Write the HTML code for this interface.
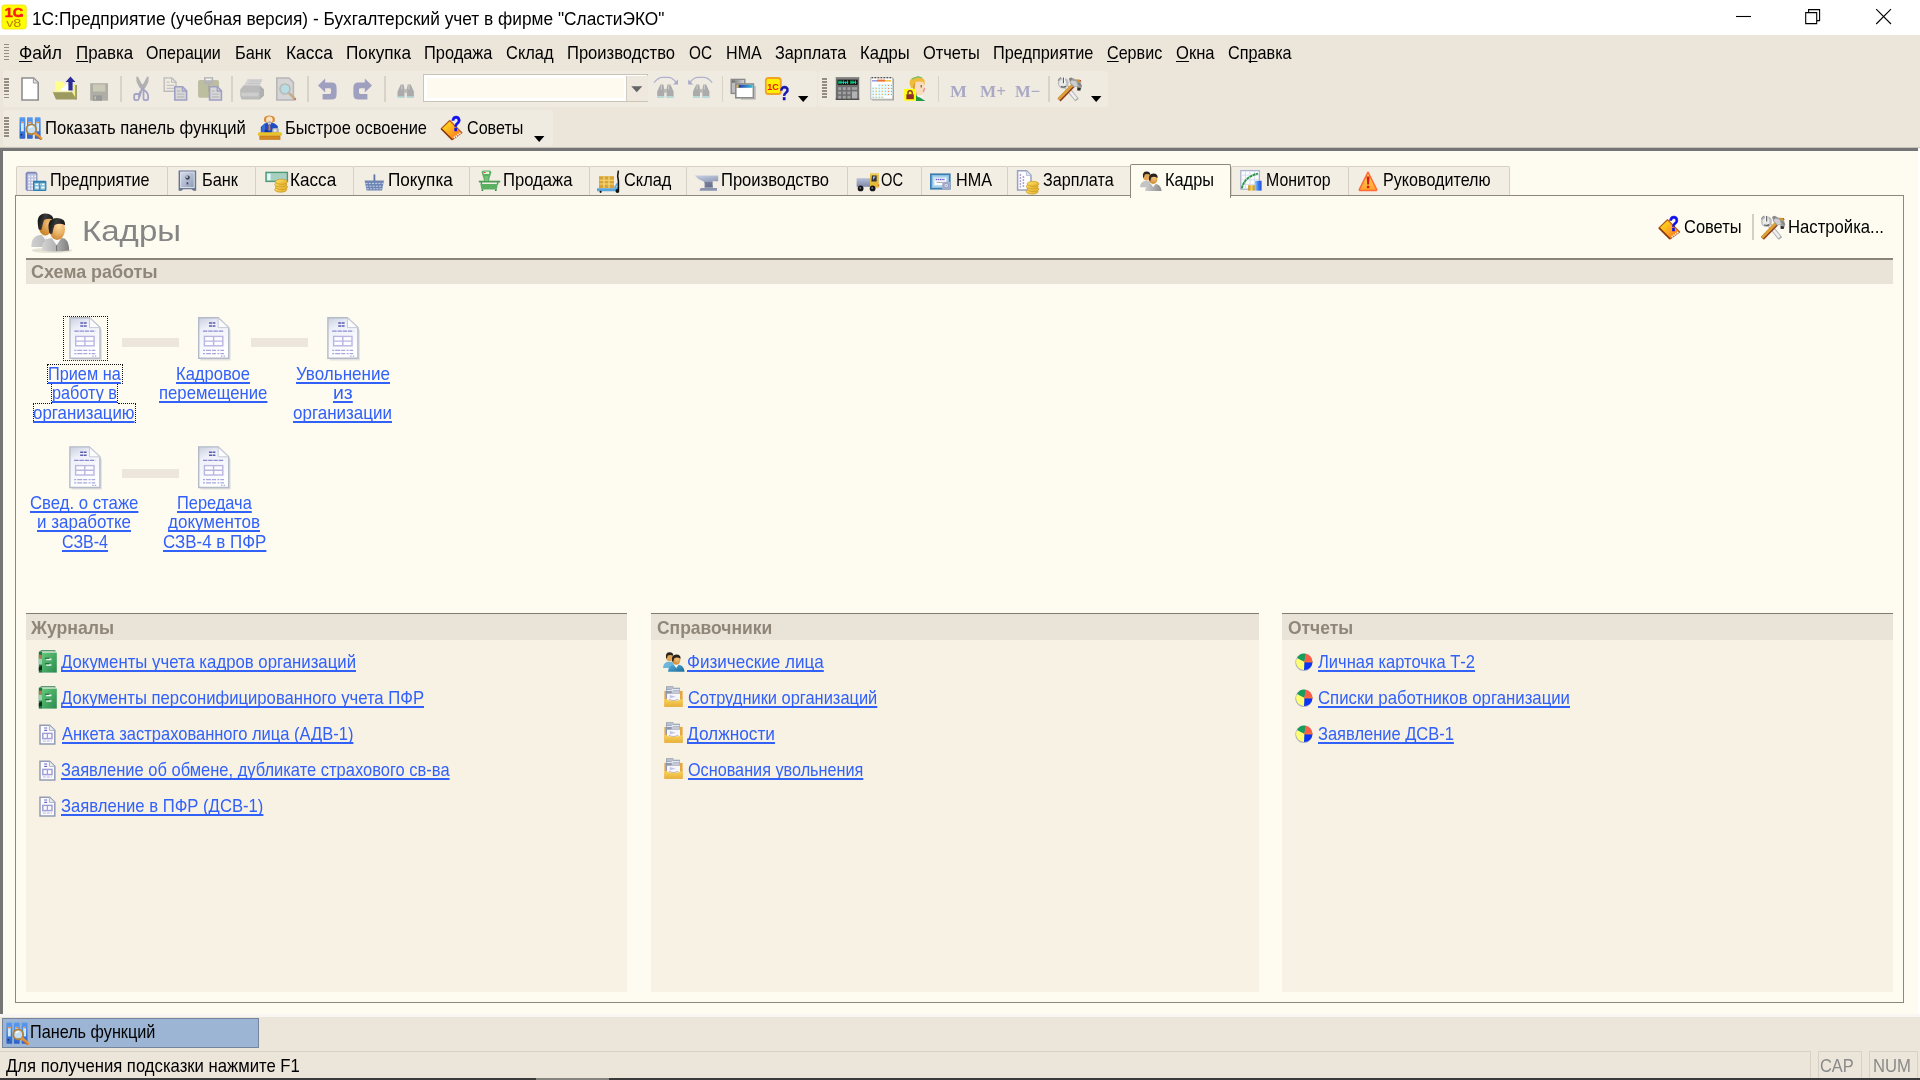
<!DOCTYPE html>
<html lang="ru"><head><meta charset="utf-8"><title>1С:Предприятие</title>
<style>
html,body{margin:0;padding:0}
body{width:1920px;height:1080px;overflow:hidden;background:#ece5da;position:relative;font-family:"Liberation Sans", sans-serif;color:#000}
.b{position:absolute;display:block}
.t{position:absolute;white-space:pre;transform-origin:0 0;display:block;filter:blur(0.35px)}
.ic{filter:blur(0.4px)}
.u{text-decoration:underline;text-decoration-thickness:1.5px;text-underline-offset:2.3px;text-decoration-skip-ink:none}
u{text-decoration-thickness:1.4px;text-underline-offset:2px;text-decoration-skip-ink:none}
svg{overflow:visible}
</style></head>
<body>
<div class="b" style="left:0px;top:0px;width:1920px;height:35px;background:#fff"></div>
<div class="b" style="left:2.5px;top:71.2px;width:814px;height:36.2px;background:#f0ebe1;border-radius:3.5px"></div>
<div class="b" style="left:818px;top:71.2px;width:290.4px;height:36.2px;background:#f0ebe1;border-radius:3.5px"></div>
<div class="b" style="left:2.5px;top:109.6px;width:550.2px;height:36.6px;background:#f0ebe1;border-radius:3.5px"></div>
<div class="b" style="left:0px;top:147.5px;width:1920px;height:869px;background:#fefbf0"></div>
<div class="b" style="left:0px;top:147px;width:1920px;height:1px;background:#c9c4bb"></div>
<div class="b" style="left:0px;top:148px;width:1918px;height:2.5px;background:#757575"></div>
<div class="b" style="left:0px;top:148px;width:2.5px;height:865.5px;background:#757575"></div>
<div class="b" style="left:1917.5px;top:149px;width:2.5px;height:868px;background:#fff"></div>
<div class="b" style="left:0px;top:1013.5px;width:1920px;height:3px;background:#f7f6f2"></div>
<div class="b" style="left:15.8px;top:165.8px;width:152.09999999999997px;height:30px;background:#f3eee3;border:1.2px solid #d6d0c4;border-bottom:none;box-sizing:border-box;border-radius:2px 2px 0 0"></div>
<div class="b" style="left:166.7px;top:165.8px;width:89.90000000000002px;height:30px;background:#f3eee3;border:1.2px solid #d6d0c4;border-bottom:none;box-sizing:border-box;border-radius:2px 2px 0 0"></div>
<div class="b" style="left:255.4px;top:165.8px;width:98.3px;height:30px;background:#f3eee3;border:1.2px solid #d6d0c4;border-bottom:none;box-sizing:border-box;border-radius:2px 2px 0 0"></div>
<div class="b" style="left:352.5px;top:165.8px;width:117.39999999999999px;height:30px;background:#f3eee3;border:1.2px solid #d6d0c4;border-bottom:none;box-sizing:border-box;border-radius:2px 2px 0 0"></div>
<div class="b" style="left:468.7px;top:165.8px;width:121.20000000000006px;height:30px;background:#f3eee3;border:1.2px solid #d6d0c4;border-bottom:none;box-sizing:border-box;border-radius:2px 2px 0 0"></div>
<div class="b" style="left:588.7px;top:165.8px;width:98.79999999999991px;height:30px;background:#f3eee3;border:1.2px solid #d6d0c4;border-bottom:none;box-sizing:border-box;border-radius:2px 2px 0 0"></div>
<div class="b" style="left:686.3px;top:165.8px;width:161.60000000000008px;height:30px;background:#f3eee3;border:1.2px solid #d6d0c4;border-bottom:none;box-sizing:border-box;border-radius:2px 2px 0 0"></div>
<div class="b" style="left:846.7px;top:165.8px;width:75.29999999999991px;height:30px;background:#f3eee3;border:1.2px solid #d6d0c4;border-bottom:none;box-sizing:border-box;border-radius:2px 2px 0 0"></div>
<div class="b" style="left:920.8px;top:165.8px;width:87.1000000000001px;height:30px;background:#f3eee3;border:1.2px solid #d6d0c4;border-bottom:none;box-sizing:border-box;border-radius:2px 2px 0 0"></div>
<div class="b" style="left:1006.7px;top:165.8px;width:125.29999999999991px;height:30px;background:#f3eee3;border:1.2px solid #d6d0c4;border-bottom:none;box-sizing:border-box;border-radius:2px 2px 0 0"></div>
<div class="b" style="left:1230.6px;top:165.8px;width:118.1000000000001px;height:30px;background:#f3eee3;border:1.2px solid #d6d0c4;border-bottom:none;box-sizing:border-box;border-radius:2px 2px 0 0"></div>
<div class="b" style="left:1347.5px;top:165.8px;width:161.99999999999994px;height:30px;background:#f3eee3;border:1.2px solid #d6d0c4;border-bottom:none;box-sizing:border-box;border-radius:2px 2px 0 0"></div>
<div class="b" style="left:15.2px;top:195.2px;width:1888.4px;height:807.7px;border:1.9px solid #8c887b;box-sizing:border-box"></div>
<div class="b" style="left:1130.0px;top:164px;width:101.40000000000013px;height:33.5px;background:#fefbf0;border:1.7px solid #8c887b;border-bottom:none;box-sizing:border-box;border-radius:2px 2px 0 0"></div>
<div class="b" style="left:25.8px;top:258.4px;width:1867.4px;height:1.9px;background:#8a8578"></div>
<div class="b" style="left:25.8px;top:260.2px;width:1867.4px;height:23.5px;background:#e9e3d8"></div>
<div class="b" style="left:1752px;top:214px;width:1.5px;height:26px;background:#d4cfc4"></div>
<div class="b" style="left:121.5px;top:338.2px;width:57px;height:8.8px;background:#ece6dc"></div>
<div class="b" style="left:250.5px;top:338.2px;width:57px;height:8.8px;background:#ece6dc"></div>
<div class="b" style="left:121.5px;top:468.8px;width:57px;height:8.8px;background:#ece6dc"></div>
<div class="b" style="left:63px;top:315.5px;width:45.3px;height:45.3px;border:1.6px dotted #111;box-sizing:border-box"></div>
<div class="b" style="left:46.8px;top:364px;width:76px;height:20.4px;border:1.6px dotted #111;box-sizing:border-box;border-bottom:none"></div>
<div class="b" style="left:51.2px;top:384px;width:67px;height:19.4px;border-left:1.6px dotted #111;border-right:1.6px dotted #111;box-sizing:border-box"></div>
<div class="b" style="left:33px;top:403px;width:103.4px;height:20.2px;border:1.6px dotted #111;box-sizing:border-box;border-top:none"></div>
<div class="b" style="left:33px;top:403px;width:19px;height:1.6px;border-top:1.6px dotted #111"></div>
<div class="b" style="left:118px;top:403px;width:18.4px;height:1.6px;border-top:1.6px dotted #111"></div>
<div class="b" style="left:46.8px;top:383.4px;width:5px;height:1.6px;border-top:1.6px dotted #111"></div>
<div class="b" style="left:118px;top:383.4px;width:4.8px;height:1.6px;border-top:1.6px dotted #111"></div>
<div class="b" style="left:25.8px;top:640px;width:601.2px;height:352px;background:#f8f2e5"></div>
<div class="b" style="left:25.8px;top:614.4px;width:601.2px;height:25.4px;background:#e9e3d8"></div>
<div class="b" style="left:25.8px;top:612.6px;width:601.2px;height:1.9px;background:#837d70"></div>
<div class="b" style="left:650.8px;top:640px;width:607.8px;height:352px;background:#f8f2e5"></div>
<div class="b" style="left:650.8px;top:614.4px;width:607.8px;height:25.4px;background:#e9e3d8"></div>
<div class="b" style="left:650.8px;top:612.6px;width:607.8px;height:1.9px;background:#837d70"></div>
<div class="b" style="left:1282.3px;top:640px;width:610.7px;height:352px;background:#f8f2e5"></div>
<div class="b" style="left:1282.3px;top:614.4px;width:610.7px;height:25.4px;background:#e9e3d8"></div>
<div class="b" style="left:1282.3px;top:612.6px;width:610.7px;height:1.9px;background:#837d70"></div>
<div class="b" style="left:1.8px;top:1018.2px;width:257.4px;height:29.4px;background:#9db5d5;border:1.5px solid #76849e;box-sizing:border-box"></div>
<div class="b" style="left:0px;top:1050.8px;width:1810.5px;height:1.2px;background:#d6d0c5"></div>
<div class="b" style="left:1809.5px;top:1050.8px;width:1.2px;height:27px;background:#d6d0c5"></div>
<div class="b" style="left:1818px;top:1050.8px;width:44px;height:27.5px;border:1.2px solid #d6d0c5;border-bottom:none;box-sizing:border-box"></div>
<div class="b" style="left:1869px;top:1050.8px;width:48.5px;height:27.5px;border:1.2px solid #d6d0c5;border-bottom:none;box-sizing:border-box"></div>
<div class="b" style="left:0px;top:1077.6px;width:1920px;height:2.4px;background:#3a3a3a"></div>
<div class="b" style="left:536px;top:1077.6px;width:73px;height:2.4px;background:#85847f"></div>
<div class="b" style="left:120.1px;top:76px;width:1.5px;height:26px;background:#d9d3c7"></div>
<div class="b" style="left:231.0px;top:76px;width:1.5px;height:26px;background:#d9d3c7"></div>
<div class="b" style="left:307.3px;top:76px;width:1.5px;height:26px;background:#d9d3c7"></div>
<div class="b" style="left:384.0px;top:76px;width:1.5px;height:26px;background:#d9d3c7"></div>
<div class="b" style="left:721.8px;top:76px;width:1.5px;height:26px;background:#d9d3c7"></div>
<div class="b" style="left:937.5999999999999px;top:76px;width:1.5px;height:26px;background:#d9d3c7"></div>
<div class="b" style="left:1048.3px;top:76px;width:1.5px;height:26px;background:#d9d3c7"></div>
<div class="b" style="left:4.3px;top:43.8px;width:4.8px;height:1.6px;background:#958d81"></div><div class="b" style="left:4.3px;top:46.82px;width:4.8px;height:1.6px;background:#958d81"></div><div class="b" style="left:4.3px;top:49.84px;width:4.8px;height:1.6px;background:#958d81"></div><div class="b" style="left:4.3px;top:52.86px;width:4.8px;height:1.6px;background:#958d81"></div><div class="b" style="left:4.3px;top:55.88px;width:4.8px;height:1.6px;background:#958d81"></div><div class="b" style="left:4.3px;top:58.9px;width:4.8px;height:1.6px;background:#958d81"></div>
<div class="b" style="left:4.3px;top:78.4px;width:4.8px;height:1.6px;background:#958d81"></div><div class="b" style="left:4.3px;top:81.42px;width:4.8px;height:1.6px;background:#958d81"></div><div class="b" style="left:4.3px;top:84.44px;width:4.8px;height:1.6px;background:#958d81"></div><div class="b" style="left:4.3px;top:87.46px;width:4.8px;height:1.6px;background:#958d81"></div><div class="b" style="left:4.3px;top:90.48px;width:4.8px;height:1.6px;background:#958d81"></div><div class="b" style="left:4.3px;top:93.5px;width:4.8px;height:1.6px;background:#958d81"></div><div class="b" style="left:4.3px;top:96.52px;width:4.8px;height:1.6px;background:#958d81"></div>
<div class="b" style="left:822px;top:78.3px;width:4.8px;height:1.6px;background:#958d81"></div><div class="b" style="left:822px;top:81.32px;width:4.8px;height:1.6px;background:#958d81"></div><div class="b" style="left:822px;top:84.34px;width:4.8px;height:1.6px;background:#958d81"></div><div class="b" style="left:822px;top:87.36px;width:4.8px;height:1.6px;background:#958d81"></div><div class="b" style="left:822px;top:90.38px;width:4.8px;height:1.6px;background:#958d81"></div><div class="b" style="left:822px;top:93.4px;width:4.8px;height:1.6px;background:#958d81"></div><div class="b" style="left:822px;top:96.42px;width:4.8px;height:1.6px;background:#958d81"></div>
<div class="b" style="left:4.3px;top:117.2px;width:4.8px;height:1.6px;background:#958d81"></div><div class="b" style="left:4.3px;top:120.22px;width:4.8px;height:1.6px;background:#958d81"></div><div class="b" style="left:4.3px;top:123.24px;width:4.8px;height:1.6px;background:#958d81"></div><div class="b" style="left:4.3px;top:126.26px;width:4.8px;height:1.6px;background:#958d81"></div><div class="b" style="left:4.3px;top:129.28px;width:4.8px;height:1.6px;background:#958d81"></div><div class="b" style="left:4.3px;top:132.3px;width:4.8px;height:1.6px;background:#958d81"></div><div class="b" style="left:4.3px;top:135.32px;width:4.8px;height:1.6px;background:#958d81"></div>
<div class="b" style="left:423px;top:74.4px;width:225px;height:27.8px;background:#ffffff;border:1.5px solid #cbc5b8;box-sizing:border-box"></div>
<div class="b" style="left:427px;top:77.8px;width:197px;height:20.4px;background:#fefaf0"></div>
<div class="b" style="left:626.4px;top:75.6px;width:20.3px;height:25.4px;background:#eee8de;border-left:1.2px solid #d2ccbf"></div>
<svg class="b" style="left:631px;top:85.5px" width="12" height="7"><path d="M0.3 0.3H11.3L5.8 6.3Z" fill="#666"/></svg>
<svg class="b" style="left:798px;top:96.3px" width="11" height="7"><path d="M0 0H10.4L5.2 6Z" fill="#000"/></svg>
<svg class="b" style="left:1090.8px;top:96.3px" width="11" height="7"><path d="M0 0H10.4L5.2 6Z" fill="#000"/></svg>
<svg class="b" style="left:534px;top:135.7px" width="11" height="7"><path d="M0 0H10.4L5.2 6Z" fill="#000"/></svg>
<svg class="b" style="left:1700px;top:0" width="220" height="35" fill="none" stroke="#000" stroke-width="1.1">
<path d="M36 16.5H51"/>
<path d="M105.7 12.6H116.7V23.6H105.7Z"/><path d="M108.6 12.4V9.6H119.6V20.6H117"/>
<path d="M176.2 9.2L191 24M191 9.2L176.2 24"/></svg>
<svg class="b ic" style="left:0;top:0" width="1920" height="1080" viewBox="0 0 1920 1080"><defs><linearGradient id="gb" x1="0" y1="0" x2="0" y2="1"><stop offset="0" stop-color="#5a9cee"/><stop offset="0.5" stop-color="#3f7ede"/><stop offset="1" stop-color="#2e62c8"/></linearGradient><linearGradient id="gbk" x1="0" y1="0" x2="1" y2="1"><stop offset="0" stop-color="#fff410"/><stop offset="0.45" stop-color="#ffb020"/><stop offset="1" stop-color="#ff6a20"/></linearGradient><linearGradient id="gsafe" x1="0" y1="0" x2="1" y2="1"><stop offset="0" stop-color="#d4dcec"/><stop offset="1" stop-color="#8e9ab6"/></linearGradient><linearGradient id="gcoin" x1="0" y1="0" x2="1" y2="1"><stop offset="0" stop-color="#ffe870"/><stop offset="1" stop-color="#e0a820"/></linearGradient><linearGradient id="ganv" x1="0" y1="0" x2="0.3" y2="1"><stop offset="0" stop-color="#c9d1e4"/><stop offset="1" stop-color="#7c86a4"/></linearGradient><linearGradient id="gtrk" x1="0" y1="0" x2="0" y2="1"><stop offset="0" stop-color="#b9c1d8"/><stop offset="1" stop-color="#7e88a8"/></linearGradient><linearGradient id="ggray" x1="0" y1="0" x2="1" y2="0"><stop offset="0" stop-color="#d0d0d0"/><stop offset="1" stop-color="#8c8c8c"/></linearGradient><linearGradient id="ggold" x1="0" y1="0" x2="1" y2="0"><stop offset="0" stop-color="#c08a18"/><stop offset="0.5" stop-color="#f4d050"/><stop offset="1" stop-color="#c08a18"/></linearGradient><linearGradient id="gblue" x1="0" y1="0" x2="1" y2="0"><stop offset="0" stop-color="#9cd4f8"/><stop offset="0.5" stop-color="#3a7cf0"/><stop offset="1" stop-color="#2a4cd8"/></linearGradient><linearGradient id="gblueb" x1="0" y1="0" x2="1" y2="1"><stop offset="0" stop-color="#58b0dc"/><stop offset="1" stop-color="#1a6a98"/></linearGradient><linearGradient id="gwarn" x1="0" y1="0" x2="0" y2="1"><stop offset="0" stop-color="#ffe060"/><stop offset="1" stop-color="#ffa028"/></linearGradient><radialGradient id="gface" cx="0.6" cy="0.4" r="0.6"><stop offset="0" stop-color="#f8c880"/><stop offset="1" stop-color="#d08a30"/></radialGradient><radialGradient id="gfaceb" cx="0.7" cy="0.4" r="0.7"><stop offset="0" stop-color="#f0be7a"/><stop offset="1" stop-color="#c87e20"/></radialGradient><radialGradient id="gfacef" cx="0.6" cy="0.3" r="0.7"><stop offset="0" stop-color="#ffdca4"/><stop offset="0.6" stop-color="#eab064"/><stop offset="1" stop-color="#cc8a38"/></radialGradient><linearGradient id="ghair" x1="0" y1="0" x2="1" y2="0.3"><stop offset="0" stop-color="#0a0a0a"/><stop offset="0.5" stop-color="#3a3a3a"/><stop offset="1" stop-color="#161616"/></linearGradient><linearGradient id="gbody1" x1="0" y1="0" x2="1" y2="0"><stop offset="0" stop-color="#cfcfcf"/><stop offset="1" stop-color="#b4b4b4"/></linearGradient><linearGradient id="gbody2" x1="0" y1="0" x2="1" y2="0"><stop offset="0" stop-color="#d4d4d4"/><stop offset="0.5" stop-color="#b4b4b4"/><stop offset="1" stop-color="#7e7e7e"/></linearGradient><linearGradient id="gdoc" x1="0" y1="0" x2="0.35" y2="1"><stop offset="0" stop-color="#c9cfdf"/><stop offset="0.3" stop-color="#eef0f8"/><stop offset="1" stop-color="#ffffff"/></linearGradient><linearGradient id="ggreen" x1="0" y1="0" x2="1" y2="1"><stop offset="0" stop-color="#62c878"/><stop offset="1" stop-color="#2a8a50"/></linearGradient><linearGradient id="gcat" x1="0" y1="0" x2="0" y2="1"><stop offset="0" stop-color="#f8d460"/><stop offset="1" stop-color="#e8b038"/></linearGradient></defs><path d="M22 78H33.6L38.2 82.6V100H22Z" fill="#fff" stroke="#8e8e8e" stroke-width="1.6"/><path d="M33.4 78.4V83H38" fill="#e4e4e4" stroke="#9a9a9a" stroke-width="1"/>
<path d="M55.3 81.5H62L64.5 83.5V92H55.3Z" fill="#ffff8c"/><path d="M58 92L66 84.5H72V92Z" fill="#fff"/><path d="M72.8 84H75.6V98H72.8Z" fill="#f3f08a"/><path d="M75.4 85V99.5H76.7V85Z" fill="#7c7a3a"/><path d="M52.4 91.2H71.5L76.5 99.6H56Z" fill="#9c9a5e"/><path d="M52.4 90.8H71.5V92.2H52.4Z" fill="#f4f2b0"/><path d="M70.5 76.6L75.4 82H72.6V90.4H68.4V82H65.6Z" fill="#2c2c96"/>
<path d="M90.2 83.2H108V100.7H90.2Z" fill="#aeaea6"/><path d="M93 84.4H105.3V91.6H93Z" fill="#cacab6"/><path d="M93 95.4H102V100.7H93Z" fill="#989898"/><path d="M94.4 96.6H96V99.6H94.4Z" fill="#c2c2b0"/>
<path d="M136.2 76.8H138L141 82.4L144 87.6L142.5 90.6L139.4 87.6L136.6 82Z" fill="#b2b2b2"/><path d="M148.8 76.8H147L144 82.4L141 87.6L142.5 90.6L145.6 87.6L148.4 82Z" fill="#b2b2b2"/><path d="M140.2 84.6H144.8L143.8 90.4H141.2Z" fill="#adadb6"/><path d="M142.2 88.6L140.2 92.6L138.8 98.6Q138.5 100.2 136.9 100.2H135.8Q134.2 100.2 134.2 98.6V95.6Q134.2 94 135.8 94H139.6" fill="none" stroke="#a3a3c6" stroke-width="1.8" stroke-linejoin="round"/><path d="M140.6 91.6L139 97" stroke="#a3a3c6" stroke-width="2.6"/><path d="M143.5 88.6V98.6Q143.5 100.2 145.1 100.2H146.5Q148.1 100.2 148.1 98.6V95.2Q147.8 92.6 144.2 90" fill="none" stroke="#a3a3c6" stroke-width="1.8" stroke-linejoin="round"/>
<path d="M164.2 77.9H171.8L176 82V91.2H164.2Z" fill="none" stroke="#bcbcbc" stroke-width="1.4"/><path d="M171.6 78V82.2H176" fill="none" stroke="#bcbcbc" stroke-width="1.1"/><path d="M166.6 82.2H169.6M166.6 85.4H174M166.6 88.4H174" stroke="#c4c4c4" stroke-width="1.2"/>
<g transform="translate(174 86)"><path d="M0.8 0.8H8.6L12.6 4.8V14H0.8Z" fill="#d8d8d8" stroke="#9f9fc4" stroke-width="1.6"/><path d="M8.4 1V5H12.4" fill="none" stroke="#9f9fc4" stroke-width="1.3"/><path d="M3 5H6M3 8.2H10.4M3 11H10.4" stroke="#bcbcbc" stroke-width="1.3"/></g>
<rect x="198" y="80" width="21" height="17.8" rx="2" fill="#bdbda0"/><path d="M208.4 84V92" stroke="#adad90" stroke-width="1"/><rect x="204" y="77.2" width="9.2" height="7.2" fill="#b4b4b4"/><rect x="205.6" y="78.6" width="6" height="1.6" fill="#f4f4f4"/>
<g transform="translate(208.8 86)"><path d="M0.8 0.8H8.6L12.6 4.8V14H0.8Z" fill="#d8d8d8" stroke="#9f9fc4" stroke-width="1.6"/><path d="M8.4 1V5H12.4" fill="none" stroke="#9f9fc4" stroke-width="1.3"/><path d="M3 5H6M3 8.2H10.4M3 11H10.4" stroke="#bcbcbc" stroke-width="1.3"/></g>
<path d="M247.6 79H262.6L259.4 86H243.6Z" fill="#d3d3d3"/><path d="M249 81H261.6M247.6 83.4H260.4" stroke="#c4c4c4" stroke-width="1"/><path d="M243.4 85.6H260L264 89.4V95.6L259.6 99.5H241.6L240.2 96V89.6Z" fill="#bbb"/><path d="M241.4 92.6H258.6V96.4H241.4Z" fill="#cdcdcd"/><path d="M260 85.8L264 89.4V95.6L259.6 99.5Z" fill="#b0b0b0"/><rect x="241.2" y="89" width="1.6" height="1.6" fill="#a9c9a9"/>
<path d="M276.8 78H289L293.4 82.4V100H276.8Z" fill="#d5d5d5" stroke="#b7b7b7" stroke-width="1.6"/><path d="M289.6 93.6L295 99" stroke="#c4ac8c" stroke-width="2.6" stroke-linecap="round"/><circle cx="295" cy="99.2" r="1" fill="#c87070"/><circle cx="285" cy="89" r="5" fill="#b5dde2" stroke="#bababa" stroke-width="1.7"/>
<path d="M318 85.4L325.2 78.4V82.6H331.6Q336.6 82.6 336.6 88V94.4Q336.6 99.6 331.4 99.6H322.6V94H329.6Q331 94 331 92.6V89.6Q331 88.2 329.6 88.2H325.2V92.4Z" fill="#9f9fc0"/>
<path d="M318 85.4L325.2 78.4V82.6H331.6Q336.6 82.6 336.6 88V94.4Q336.6 99.6 331.4 99.6H322.6V94H329.6Q331 94 331 92.6V89.6Q331 88.2 329.6 88.2H325.2V92.4Z" fill="#9f9fc0" transform="translate(690 0) scale(-1 1)"/>
<g transform="translate(397.5 84.6)"><path d="M3.2 0H6.2L7 4.4V13H0V7Z" fill="#ababab"/><path d="M10.2 0H13.2L16.4 7V13H9.4V4.4Z" fill="#ababab"/><path d="M6.6 4.6H9.8V8.2H6.6Z" fill="#b9b9b9"/><path d="M4.2 0.6V5M11.4 0.6V5" stroke="#c9c9c9" stroke-width="1.2"/><path d="M0 11.6H7V13.2H0ZM9.4 11.6H16.4V13.2H9.4Z" fill="#b6dcdc"/></g>
<g transform="translate(657.2 84.5)"><path d="M3.2 0H6.2L7 4.4V13H0V7Z" fill="#ababab"/><path d="M10.2 0H13.2L16.4 7V13H9.4V4.4Z" fill="#ababab"/><path d="M6.6 4.6H9.8V8.2H6.6Z" fill="#b9b9b9"/><path d="M4.2 0.6V5M11.4 0.6V5" stroke="#c9c9c9" stroke-width="1.2"/><path d="M0 11.6H7V13.2H0ZM9.4 11.6H16.4V13.2H9.4Z" fill="#b6dcdc"/></g>
<path d="M654 82.6Q658.6 77.4 662.4 77.4H668.4Q672 77.4 676 82" fill="none" stroke="#b0b0d0" stroke-width="1.25"/><path d="M678 79.6V84.6H673Z" fill="#a9a9cc"/>
<g transform="translate(693 84.5)"><path d="M3.2 0H6.2L7 4.4V13H0V7Z" fill="#ababab"/><path d="M10.2 0H13.2L16.4 7V13H9.4V4.4Z" fill="#ababab"/><path d="M6.6 4.6H9.8V8.2H6.6Z" fill="#b9b9b9"/><path d="M4.2 0.6V5M11.4 0.6V5" stroke="#c9c9c9" stroke-width="1.2"/><path d="M0 11.6H7V13.2H0ZM9.4 11.6H16.4V13.2H9.4Z" fill="#b6dcdc"/></g>
<g transform="translate(1366.2 0) scale(-1 1)"><path d="M654 82.6Q658.6 77.4 662.4 77.4H668.4Q672 77.4 676 82" fill="none" stroke="#b0b0d0" stroke-width="1.25"/><path d="M678 79.6V84.6H673Z" fill="#a9a9cc"/></g>
<defs><linearGradient id="gw" x1="0" x2="1"><stop offset="0" stop-color="#2626a0"/><stop offset="1" stop-color="#35c0d8"/></linearGradient><linearGradient id="gw2" x1="0" x2="1"><stop offset="0" stop-color="#6a6a6a"/><stop offset="1" stop-color="#d5d5d5"/></linearGradient></defs><rect x="731.2" y="79.4" width="13.6" height="14" fill="#bebebe" stroke="#8a8a8a" stroke-width="1.4"/><rect x="732" y="80.2" width="12" height="2.6" fill="url(#gw2)"/><rect x="735.8" y="84" width="17.6" height="13.8" fill="#fff" stroke="#8a8a8a" stroke-width="1.6"/><rect x="736.6" y="84.8" width="16" height="3" fill="url(#gw)"/><rect x="736.6" y="84.8" width="2" height="3" fill="#f0c020"/><path d="M741 98.8H755V86" fill="none" stroke="#a8a8a8" stroke-width="1.2"/>
<rect x="765.8" y="78" width="15" height="16" rx="2.6" fill="#ffef00" stroke="#f0a224" stroke-width="1.8"/><text x="767.2" y="89.6" font-family="Liberation Sans, sans-serif" font-size="9.5" font-weight="bold" fill="#f01010" textLength="11.6" lengthAdjust="spacingAndGlyphs">1С</text><text x="779.6" y="99.6" font-family="Liberation Sans, sans-serif" font-size="21" font-weight="bold" fill="#1616b4" stroke="#1616b4" stroke-width="0.4" textLength="10" lengthAdjust="spacingAndGlyphs">?</text>
<rect x="835.8" y="77.2" width="23.4" height="22.8" fill="#6f6f6f"/><rect x="835.8" y="77.2" width="23.4" height="1.4" fill="#8d8d8d"/><rect x="835.8" y="98.6" width="23.4" height="1.4" fill="#4f4f4f"/><rect x="837.6" y="79.8" width="20" height="5" fill="#0a0a0a"/><path d="M839 80.6V84M841 80.6V84M843.4 80.6V84M845.6 81.6V84M847.6 80.6V84M851 80.6V84M853 80.6V84M855.4 80.6V84" stroke="#10e060" stroke-width="1.1"/><path d="M838.6 82.3H848M850.6 82.3H856.4" stroke="#10d8d0" stroke-width="0.9"/><rect x="838.2" y="87.2" width="3" height="2.8" fill="#a2a2a2"/><rect x="838.2" y="91.5" width="3" height="2.8" fill="#a2a2a2"/><rect x="838.2" y="95.8" width="3" height="2.8" fill="#a2a2a2"/><rect x="842.8" y="87.2" width="3" height="2.8" fill="#a2a2a2"/><rect x="842.8" y="91.5" width="3" height="2.8" fill="#a2a2a2"/><rect x="842.8" y="95.8" width="3" height="2.8" fill="#a2a2a2"/><rect x="847.4" y="87.2" width="3" height="2.8" fill="#a2a2a2"/><rect x="847.4" y="91.5" width="3" height="2.8" fill="#a2a2a2"/><rect x="847.4" y="95.8" width="3" height="2.8" fill="#a2a2a2"/><rect x="852" y="87.2" width="5.2" height="2.6" fill="#a2a2a2"/><rect x="852" y="91.4" width="5.2" height="7" fill="#b2b2b2"/>
<rect x="872" y="78.8" width="22" height="21.6" fill="#9a9a9a"/><rect x="870.8" y="77.8" width="22" height="21.4" fill="#fff" stroke="#b6b6b6" stroke-width="1"/><path d="M871.6 77.6H892.4" stroke="#555" stroke-width="1.4" stroke-dasharray="1.5 1.5"/><rect x="872" y="80" width="5" height="1.6" fill="#9aa0e0"/><rect x="877" y="79.6" width="8" height="2" fill="#f07030"/><rect x="885" y="80" width="6" height="1.6" fill="#f6c040"/><rect x="872.0" y="87.2" width="2.4" height="2.3" fill="#cdf1f6"/><rect x="872.8" y="88.0" width="1" height="1" fill="#f0b060"/><rect x="872.0" y="90.2" width="2.4" height="2.3" fill="#cdf1f6"/><rect x="872.8" y="91.0" width="1" height="1" fill="#f0b060"/><rect x="872.0" y="93.2" width="2.4" height="2.3" fill="#cdf1f6"/><rect x="872.8" y="94.0" width="1" height="1" fill="#f0b060"/><rect x="872.0" y="96.2" width="2.4" height="2.3" fill="#cdf1f6"/><rect x="872.8" y="97.0" width="1" height="1" fill="#f0b060"/><rect x="875.0" y="87.2" width="2.4" height="2.3" fill="#cdf1f6"/><rect x="875.8" y="88.0" width="1" height="1" fill="#f0b060"/><rect x="875.0" y="90.2" width="2.4" height="2.3" fill="#cdf1f6"/><rect x="875.8" y="91.0" width="1" height="1" fill="#f0b060"/><rect x="875.0" y="93.2" width="2.4" height="2.3" fill="#cdf1f6"/><rect x="875.8" y="94.0" width="1" height="1" fill="#f0b060"/><rect x="875.0" y="96.2" width="2.4" height="2.3" fill="#cdf1f6"/><rect x="875.8" y="97.0" width="1" height="1" fill="#f0b060"/><rect x="878.1" y="84.2" width="2.4" height="2.3" fill="#cdf1f6"/><rect x="878.9" y="85.0" width="1" height="1" fill="#f0b060"/><rect x="878.1" y="87.2" width="2.4" height="2.3" fill="#cdf1f6"/><rect x="878.9" y="88.0" width="1" height="1" fill="#f0b060"/><rect x="878.1" y="90.2" width="2.4" height="2.3" fill="#cdf1f6"/><rect x="878.9" y="91.0" width="1" height="1" fill="#f0b060"/><rect x="878.1" y="93.2" width="2.4" height="2.3" fill="#cdf1f6"/><rect x="878.9" y="94.0" width="1" height="1" fill="#f0b060"/><rect x="878.1" y="96.2" width="2.4" height="2.3" fill="#cdf1f6"/><rect x="878.9" y="97.0" width="1" height="1" fill="#f0b060"/><rect x="881.1" y="84.2" width="2.4" height="2.3" fill="#cdf1f6"/><rect x="881.9" y="85.0" width="1" height="1" fill="#f0b060"/><rect x="881.1" y="87.2" width="2.4" height="2.3" fill="#cdf1f6"/><rect x="881.9" y="88.0" width="1" height="1" fill="#f0b060"/><rect x="881.1" y="90.2" width="2.4" height="2.3" fill="#cdf1f6"/><rect x="881.9" y="91.0" width="1" height="1" fill="#f0b060"/><rect x="881.1" y="93.2" width="2.4" height="2.3" fill="#cdf1f6"/><rect x="881.9" y="94.0" width="1" height="1" fill="#f0b060"/><rect x="881.1" y="96.2" width="2.4" height="2.3" fill="#cdf1f6"/><rect x="881.9" y="97.0" width="1" height="1" fill="#f0b060"/><rect x="884.2" y="84.2" width="2.4" height="2.3" fill="#cdf1f6"/><rect x="885.0" y="85.0" width="1" height="1" fill="#f0b060"/><rect x="884.2" y="87.2" width="2.4" height="2.3" fill="#cdf1f6"/><rect x="885.0" y="88.0" width="1" height="1" fill="#f0b060"/><rect x="884.2" y="90.2" width="2.4" height="2.3" fill="#cdf1f6"/><rect x="885.0" y="91.0" width="1" height="1" fill="#f0b060"/><rect x="884.2" y="93.2" width="2.4" height="2.3" fill="#cdf1f6"/><rect x="885.0" y="94.0" width="1" height="1" fill="#f0b060"/><rect x="887.2" y="84.2" width="2.4" height="2.3" fill="#cdf1f6"/><rect x="888.0" y="85.0" width="1" height="1" fill="#ff8040"/><rect x="887.2" y="87.2" width="2.4" height="2.3" fill="#cdf1f6"/><rect x="888.0" y="88.0" width="1" height="1" fill="#ff8040"/><rect x="887.2" y="90.2" width="2.4" height="2.3" fill="#cdf1f6"/><rect x="888.0" y="91.0" width="1" height="1" fill="#ff8040"/><rect x="887.2" y="93.2" width="2.4" height="2.3" fill="#cdf1f6"/><rect x="888.0" y="94.0" width="1" height="1" fill="#ff8040"/><rect x="890.3" y="84.2" width="2.4" height="2.3" fill="#cdf1f6"/><rect x="891.1" y="85.0" width="1" height="1" fill="#ff8040"/><rect x="890.3" y="87.2" width="2.4" height="2.3" fill="#cdf1f6"/><rect x="891.1" y="88.0" width="1" height="1" fill="#ff8040"/><rect x="890.3" y="90.2" width="2.4" height="2.3" fill="#cdf1f6"/><rect x="891.1" y="91.0" width="1" height="1" fill="#ff8040"/><rect x="890.3" y="93.2" width="2.4" height="2.3" fill="#cdf1f6"/><rect x="891.1" y="94.0" width="1" height="1" fill="#ff8040"/>
<path d="M911 88Q907 80 913 77.4Q921 75.4 924.4 80Q925.6 84 923 87Z" fill="#f0bc3c"/><path d="M912 79L918 76.6L922 78" fill="none" stroke="#70c070" stroke-width="1.2"/><path d="M915.4 82Q921 80.6 923.6 82.4L924.6 89L923.2 94.6Q920 96.6 917 94.6L914.4 88.6Z" fill="#f9dcc0"/><path d="M921.2 85V87.6" stroke="#705030" stroke-width="1.1"/><path d="M924.6 88L923.4 92" stroke="#e89090" stroke-width="1.4"/><path d="M913 86Q912.4 92 915.6 95.6L917 94.6L914.6 88.6L915.4 82Z" fill="#d89a38"/><path d="M916 95L925.4 101H916Z" fill="#209848"/><path d="M917.4 94.6L920 96L923 94.6L922.6 97.6L917.6 97Z" fill="#f4f4f4"/><rect x="904.2" y="88.9" width="11.8" height="11.8" fill="#ffff00"/><rect x="906.4" y="94.2" width="7.4" height="5" fill="#8e2c30"/><path d="M908 94.2V92.6Q908 90.8 910.1 90.8Q912.2 90.8 912.2 92.6V94.2" fill="none" stroke="#8e2c30" stroke-width="1.4"/>
<g transform="translate(1057.5 76.8)"><path d="M8.4 9.4L19 22.6" stroke="#b4b4b4" stroke-width="4.6"/><path d="M8.4 9.4L19.2 22.8" stroke="#efefef" stroke-width="2.6"/><path d="M17.6 24L20.8 21.4" stroke="#a9a9a9" stroke-width="1.4"/><circle cx="5.7" cy="6.3" r="5.5" fill="#bdbdbd"/><circle cx="5.2" cy="6.6" r="3.6" fill="#e9e9e9"/><path d="M5.9 0.4V6.8" stroke="#f6f6f6" stroke-width="3.2"/><path d="M5.9 0.8V6.4" stroke="#555" stroke-width="1.1"/><path d="M3.4 9.6Q5.8 11 8.4 9.4" stroke="#5e5e5e" stroke-width="1.3" fill="none"/><path d="M0.6 4Q1.6 1.4 3.6 0.8" stroke="#8a8a8a" stroke-width="1.1" fill="none"/><path d="M1.6 23.2L15.6 8.8" stroke="#8c3c22" stroke-width="4.2"/><path d="M1.1 22.5L15 8.2" stroke="#dca034" stroke-width="3"/><path d="M11.4 1.8L14 0.6L18.4 2.8L22.6 3.4L24.5 9.4L23 13.6L20 13.6L19.4 9.8L16 10.4L12.4 6.2Z" fill="#9f9f9f"/><path d="M13.4 3.4L18.6 4.4L20.2 9L16.8 9.6L13.2 5.8Z" fill="#cfcfcf"/><path d="M20 10.8L23.2 11.2L22.8 13.8L19.8 13.6Z" fill="#2c2c2c"/><path d="M18.6 2.4L22.4 3L23 5.8L19.8 4.6Z" fill="#d89428"/><path d="M22.4 3L23.4 4.6" stroke="#a02c20" stroke-width="1"/><path d="M11.4 1.8L12.8 4.4L15 2.6L14 0.6Z" fill="#868686"/><path d="M21 6L23.6 9.4" stroke="#7c7c7c" stroke-width="1.2"/></g>
<g transform="translate(19.5 117.3)"><rect x="0" y="0" width="5.8" height="21.4" rx="0.8" fill="url(#gb)"/><rect x="1.5" y="4.4" width="2.8" height="9.6" fill="#cfeafc"/><rect x="1.5" y="4.6" width="2.8" height="1.3" fill="#e88a50"/><rect x="7.5" y="0" width="5.8" height="21.4" rx="0.8" fill="url(#gb)"/><rect x="9.0" y="4.4" width="2.8" height="9.6" fill="#cfeafc"/><rect x="9.0" y="4.6" width="2.8" height="1.3" fill="#e88a50"/><rect x="15.3" y="0" width="5.8" height="21.4" rx="0.8" fill="url(#gb)"/><rect x="16.8" y="4.4" width="2.8" height="9.6" fill="#cfeafc"/><rect x="16.8" y="4.6" width="2.8" height="1.3" fill="#e88a50"/><circle cx="1.9" cy="17.4" r="0.9" fill="#14306a"/><circle cx="11.8" cy="12" r="4.9" fill="#c4e0f8" stroke="#b0833a" stroke-width="1.9"/><path d="M9.6 10.6Q11 8.8 13 9.2" stroke="#fff" stroke-width="1.4" fill="none"/><path d="M16 16.2L21.4 21.2" stroke="#e8923a" stroke-width="3" stroke-linecap="round"/><path d="M17.2 18.8L21 22.2" stroke="#8a5020" stroke-width="0.9"/></g>
<path d="M264.2 121.6Q262.6 115.6 269.4 115.6Q276.4 115.6 274.6 121.6Q273 123.4 269.4 123.4Q265.8 123.4 264.2 121.6Z" fill="#d88c34"/><ellipse cx="269.4" cy="119.8" rx="3.3" ry="3.4" fill="#fbe2c4"/><path d="M268.4 121.4H270.4" stroke="#d09080" stroke-width="0.8"/><path d="M260.8 133V127L264.6 123.4L268 122.6H271L274.6 123.4L277.8 126V133Z" fill="#1f4cc0"/><path d="M262 127L264.6 123.6L266 133H261Z" fill="#3a6ada"/><path d="M265.4 129L270 132.6H264Z" fill="#12349a"/><path d="M267.4 122.8L269.4 126L271.4 122.8Z" fill="#e8f0fa"/><path d="M268.8 123.4H270L270.4 129.6L269.4 130.8L268.4 129.6Z" fill="#e47830"/><rect x="272.2" y="128" width="6.6" height="6" rx="1.6" fill="#a9afba"/><rect x="273.6" y="129.4" width="2.8" height="2.2" fill="#eef0f4"/><rect x="257.8" y="132.2" width="24.2" height="3.6" rx="1.6" fill="#e8c228"/><rect x="259.4" y="135.6" width="21" height="4.2" fill="#c87a18"/><rect x="260.4" y="136.6" width="19" height="2.4" fill="#d08a24"/>
<g transform="translate(441.2 115.8)"><path d="M8.5 4.7L20.6 16.9L11 23.9L0 12.9Z" fill="url(#gbk)" stroke="#b8581a" stroke-width="1.2" stroke-linejoin="round"/><path d="M0 12.9L11 23.9" stroke="#8a3c10" stroke-width="1.6"/><path d="M12.6 22L19.4 17" stroke="#fff" stroke-width="1.8" stroke-dasharray="1.3 1"/><text x="9.8" y="15.6" font-family="Liberation Sans, sans-serif" font-size="21.5" font-weight="bold" fill="#1010ee" stroke="#1010ee" stroke-width="0.5" textLength="10.2" lengthAdjust="spacingAndGlyphs">?</text></g>
<path d="M27 171.8H36L37.4 173.4V191H27L25.6 189.4V173.4Z" fill="#7f88ba"/><path d="M27.4 173.6H36.4V190.4H27.4Z" fill="#bcc2de"/><rect x="28.4" y="175.6" width="1.6" height="1.7" fill="#f4f6fc"/><rect x="28.4" y="178.7" width="1.6" height="1.7" fill="#f4f6fc"/><rect x="28.4" y="181.7" width="1.6" height="1.7" fill="#f4f6fc"/><rect x="28.4" y="184.8" width="1.6" height="1.7" fill="#f4f6fc"/><rect x="28.4" y="187.8" width="1.6" height="1.7" fill="#f4f6fc"/><rect x="31.4" y="175.6" width="1.6" height="1.7" fill="#f4f6fc"/><rect x="31.4" y="178.7" width="1.6" height="1.7" fill="#f4f6fc"/><rect x="31.4" y="181.7" width="1.6" height="1.7" fill="#f4f6fc"/><rect x="31.4" y="184.8" width="1.6" height="1.7" fill="#f4f6fc"/><rect x="31.4" y="187.8" width="1.6" height="1.7" fill="#f4f6fc"/><rect x="34.5" y="175.6" width="1.6" height="1.7" fill="#f4f6fc"/><rect x="34.5" y="178.7" width="1.6" height="1.7" fill="#f4f6fc"/><rect x="33" y="180.8" width="13.4" height="10.2" rx="1.2" fill="#2f7fae"/><rect x="34.4" y="182.8" width="10.8" height="7" fill="#8dc0da"/><path d="M35.4 184.4H38M39 184.4H41M42 184.4H44.4" stroke="#fff" stroke-width="1.2"/><rect x="35.4" y="186.6" width="3" height="1.8" fill="#fff"/><rect x="41.4" y="186.6" width="3" height="1.8" fill="#fff"/><path d="M39.8 183V190" stroke="#2f7fae" stroke-width="1"/>
<path d="M178.6 170.4H196.2V190.8H193.4L191.6 189.2H183.2L181.4 190.8H178.6Z" fill="#66758f"/><rect x="180.6" y="172" width="13.6" height="15.6" fill="url(#gsafe)"/><rect x="180.6" y="172" width="13.6" height="15.6" fill="none" stroke="#e6eaf4" stroke-width="0.9"/><circle cx="187.6" cy="177.6" r="2.2" fill="#3e4658"/><circle cx="187" cy="177" r="0.9" fill="#dfe4ee"/><rect x="186.6" y="182.2" width="1.6" height="2.2" fill="#3e4658"/>
<rect x="266" y="172.4" width="21.4" height="9" fill="#a8d0c2" stroke="#4c9a78" stroke-width="1.4"/><rect x="267.2" y="173.6" width="3.4" height="6.6" fill="#e0fafa"/>
<g transform="translate(274.6 177.4)"><ellipse cx="6.1000000000000005" cy="12.2" rx="6" ry="2.6" fill="url(#gcoin)" stroke="#c8941c" stroke-width="0.7"/><ellipse cx="6.9" cy="9.6" rx="6" ry="2.6" fill="url(#gcoin)" stroke="#c8941c" stroke-width="0.7"/><ellipse cx="6.1000000000000005" cy="6.999999999999999" rx="6" ry="2.6" fill="url(#gcoin)" stroke="#c8941c" stroke-width="0.7"/><ellipse cx="6.9" cy="4.399999999999999" rx="6" ry="2.6" fill="url(#gcoin)" stroke="#c8941c" stroke-width="0.7"/></g>
<path d="M364.6 180.6H384L382 190.4H366.6Z" fill="#6e85b4"/><path d="M374.4 174.4V181" stroke="#5f76a8" stroke-width="1.8"/><path d="M365.6 183.4H383M366.2 186.2H382.6M366.8 188.8H382" stroke="#d5deee" stroke-width="0.9" stroke-dasharray="2 1.2"/>
<path d="M481.6 172.4Q481.6 170.4 483.6 170.4H489.4Q491.4 170.4 491.4 172.4L489.6 178L489 181H484L483.4 178Z" fill="#5cb062"/><rect x="483.6" y="171.6" width="5.6" height="2.4" fill="#e6f4e0"/><rect x="484" y="172" width="1.6" height="1" fill="#e04040"/><path d="M478.8 181.6H500.2" stroke="#4c9c54" stroke-width="1.8"/><path d="M481.4 182V184.4M497.6 182V184.4" stroke="#4c9c54" stroke-width="1.4"/><path d="M480.4 184H497.8L496.8 189.4H481.4Z" fill="#5cb062"/><path d="M482.4 189.4V191M495.8 189.4V191" stroke="#3c7c44" stroke-width="1.6"/><path d="M484.6 176L488.4 176L488 181H485Z" fill="#74c27a"/>
<rect x="599" y="176.2" width="15" height="11.8" fill="#d9a436"/><path d="M599.4 180.2H614M599.4 184H614M604 176.4V188M609 176.4V188" stroke="#f6dc80" stroke-width="1.1"/><path d="M597 188.2H615L618 186.4V191.2H597Z" fill="#5aa4dc"/><path d="M614.6 188L617.4 183.4" stroke="#5aa4dc" stroke-width="1.6"/><path d="M618.4 170.6Q617 176 618.4 181V190" fill="none" stroke="#111" stroke-width="1.6"/><circle cx="617.4" cy="191" r="1.9" fill="#111"/><circle cx="600.6" cy="191.8" r="1.1" fill="#111"/>
<path d="M694.6 175.4H718.2V181.2H712.6Q711.4 184 713 187.6H704.6Q706.4 184 703.6 181.4Q698.6 180 694.6 175.4Z" fill="url(#ganv)"/><path d="M700.6 188H717V190.8H699.4Z" fill="#8a94ae"/><path d="M704.4 182H712.8V187.6H704.4Z" fill="#5c6484" opacity="0.55"/>
<rect x="856.6" y="178.2" width="13.8" height="8.6" fill="url(#gtrk)"/><rect x="870" y="173.4" width="8.8" height="14.2" fill="#e4bc3c"/><path d="M870 173.4H878.8V175H870Z" fill="#f0d060"/><path d="M872 175.6H876.6V181.6H871.4Z" fill="#2c3444"/><path d="M873 176.4L875.6 176.4L873 180Z" fill="#b8c4d4"/><rect x="877.8" y="184.6" width="1.4" height="1.6" fill="#f06020"/><circle cx="860.6" cy="188.4" r="2.9" fill="#16161a"/><circle cx="872.6" cy="188.4" r="2.9" fill="#16161a"/><circle cx="860.2" cy="188" r="0.9" fill="#777"/><circle cx="872.2" cy="188" r="0.9" fill="#777"/>
<rect x="930" y="173.4" width="20.6" height="16.2" fill="#3c7cae"/><rect x="931.6" y="175" width="17.4" height="13" fill="#8cc0e0"/><rect x="933" y="176.4" width="14.6" height="10.2" fill="#bcdcf0"/><rect x="934.6" y="178" width="11.4" height="7" fill="#fff"/><path d="M935.6 179.6H945" stroke="#6a5ad0" stroke-width="1.5" stroke-dasharray="1.6 0.6"/><path d="M936.6 182.4H942" stroke="#999" stroke-width="0.9"/><rect x="942.2" y="181.8" width="8" height="7.6" rx="1" fill="#a9abc9"/><circle cx="946.2" cy="185.6" r="2.3" fill="#d9daec" stroke="#8f91b8" stroke-width="0.8"/><circle cx="946.2" cy="185.6" r="0.7" fill="#8f91b8"/>
<path d="M1017.6 170.8H1026.6L1031 175.2V190H1017.6Z" fill="#fdfdff" stroke="#97a2c0" stroke-width="1.5"/><path d="M1026.4 171V175.4H1030.8" fill="#e4e8f4" stroke="#b5bdd4" stroke-width="1"/><path d="M1020.4 174V187.4M1023.4 176V187.4" stroke="#a9a4dc" stroke-width="1.5" stroke-dasharray="2 1"/>
<g transform="translate(1026.2 179.6) scale(0.98)"><ellipse cx="6.1000000000000005" cy="12.2" rx="6" ry="2.6" fill="url(#gcoin)" stroke="#c8941c" stroke-width="0.7"/><ellipse cx="6.9" cy="9.6" rx="6" ry="2.6" fill="url(#gcoin)" stroke="#c8941c" stroke-width="0.7"/><ellipse cx="6.1000000000000005" cy="6.999999999999999" rx="6" ry="2.6" fill="url(#gcoin)" stroke="#c8941c" stroke-width="0.7"/><ellipse cx="6.9" cy="4.399999999999999" rx="6" ry="2.6" fill="url(#gcoin)" stroke="#c8941c" stroke-width="0.7"/></g>
<g transform="translate(1140 170.6)"><path d="M0 16.6Q0.4 11.4 4.6 10.4H9.4L12 16.6Z" fill="#c4c4c4"/><ellipse cx="6.6" cy="5.6" rx="3.6" ry="4.3" fill="#e2a456"/><path d="M3 6.4Q2.2 0.8 6.6 0.8Q10.6 0.8 10.2 4.4Q7.4 2.8 4.8 4Q4.2 5.6 3.8 7.4Z" fill="#2a2420"/><path d="M5 20.4Q5.4 14.4 10.4 13.4H16Q21 14.4 21.6 20.4Z" fill="url(#ggray)"/><path d="M10.8 13.4L13.2 16.6L15.6 13.4Z" fill="#f6f6f6"/><ellipse cx="13.2" cy="8.4" rx="4.2" ry="4.9" fill="url(#gface)"/><path d="M9 9.6Q8.2 3 13.4 3Q18 3.2 17.6 7.4Q14.6 5.4 11.4 6.6Q10.4 8.4 10.2 10.6Z" fill="#2a2420"/></g>
<rect x="1240.8" y="170.6" width="18.6" height="18.6" fill="#fdfdff" stroke="#aab4cc" stroke-width="1.3"/><path d="M1245.4 171V189M1250 171V189M1254.6 171V189M1241 175.2H1259M1241 179.8H1259M1241 184.4H1259" stroke="#d6dcf0" stroke-width="1"/><path d="M1241.8 188.4Q1243.6 181 1249 177.4Q1253.6 174.4 1258 173.6" fill="none" stroke="#2c9844" stroke-width="1.9" stroke-dasharray="3 0.5"/><rect x="1248.2" y="185.2" width="6.6" height="5.4" fill="url(#ggold)"/><rect x="1254.8" y="180.8" width="6.8" height="9.8" fill="url(#gblue)"/>
<path d="M1368 172.2L1376.6 189.4Q1377 190.6 1375.6 190.6H1360.4Q1359 190.6 1359.4 189.4Z" fill="url(#gwarn)" stroke="#ff6a3a" stroke-width="1.5" stroke-linejoin="round"/><path d="M1366.6 176.6H1369.6L1369 184.6H1367.2Z" fill="#d81818"/><rect x="1366.9" y="185.8" width="2.4" height="2.4" fill="#d81818"/>
<ellipse cx="52" cy="250.4" rx="20" ry="2.6" fill="#d9d5c6" opacity="0.7"/><path d="M31.4 247Q31 238 37.4 235.4L45 234.4L50.6 247Z" fill="url(#gbody1)"/><path d="M41.4 234.6L45.4 240L49 236Z" fill="#f4f4f4"/><ellipse cx="45.4" cy="225.4" rx="7" ry="10" fill="url(#gfaceb)"/><path d="M38.6 229Q35 213.6 45.6 213.6Q53 214 53.4 219.4Q48 217.6 44 220Q42.6 224 41.6 229.6Q40 230.4 38.6 229Z" fill="url(#ghair)"/><path d="M42 250.6Q41.4 241 48.4 238.6L57 237.4L64.6 238.6Q69.4 242 69 250.6Q55 252.4 42 250.6Z" fill="url(#gbody2)"/><path d="M51.6 237.8L56.6 245.2L61.6 237.8Z" fill="#fafafa"/><path d="M56.6 245.2V251" stroke="#777" stroke-width="1.2"/><ellipse cx="57.2" cy="229.6" rx="7.8" ry="10.4" fill="url(#gfacef)"/><path d="M49.4 233Q45.6 218 57.4 218Q65.6 218.6 65.2 225.2Q59.6 222.6 54.6 225Q53 229 52.4 233.6Q50.8 234.6 49.4 233Z" fill="url(#ghair)"/>
<g transform="translate(1659 215)"><path d="M8.5 4.7L20.6 16.9L11 23.9L0 12.9Z" fill="url(#gbk)" stroke="#b8581a" stroke-width="1.2" stroke-linejoin="round"/><path d="M0 12.9L11 23.9" stroke="#8a3c10" stroke-width="1.6"/><path d="M12.6 22L19.4 17" stroke="#fff" stroke-width="1.8" stroke-dasharray="1.3 1"/><text x="9.8" y="15.6" font-family="Liberation Sans, sans-serif" font-size="21.5" font-weight="bold" fill="#1010ee" stroke="#1010ee" stroke-width="0.5" textLength="10.2" lengthAdjust="spacingAndGlyphs">?</text></g>
<g transform="translate(1760.8 215.2)"><path d="M8.4 9.4L19 22.6" stroke="#b4b4b4" stroke-width="4.6"/><path d="M8.4 9.4L19.2 22.8" stroke="#efefef" stroke-width="2.6"/><path d="M17.6 24L20.8 21.4" stroke="#a9a9a9" stroke-width="1.4"/><circle cx="5.7" cy="6.3" r="5.5" fill="#bdbdbd"/><circle cx="5.2" cy="6.6" r="3.6" fill="#e9e9e9"/><path d="M5.9 0.4V6.8" stroke="#f6f6f6" stroke-width="3.2"/><path d="M5.9 0.8V6.4" stroke="#555" stroke-width="1.1"/><path d="M3.4 9.6Q5.8 11 8.4 9.4" stroke="#5e5e5e" stroke-width="1.3" fill="none"/><path d="M0.6 4Q1.6 1.4 3.6 0.8" stroke="#8a8a8a" stroke-width="1.1" fill="none"/><path d="M1.6 23.2L15.6 8.8" stroke="#8c3c22" stroke-width="4.2"/><path d="M1.1 22.5L15 8.2" stroke="#dca034" stroke-width="3"/><path d="M11.4 1.8L14 0.6L18.4 2.8L22.6 3.4L24.5 9.4L23 13.6L20 13.6L19.4 9.8L16 10.4L12.4 6.2Z" fill="#9f9f9f"/><path d="M13.4 3.4L18.6 4.4L20.2 9L16.8 9.6L13.2 5.8Z" fill="#cfcfcf"/><path d="M20 10.8L23.2 11.2L22.8 13.8L19.8 13.6Z" fill="#2c2c2c"/><path d="M18.6 2.4L22.4 3L23 5.8L19.8 4.6Z" fill="#d89428"/><path d="M22.4 3L23.4 4.6" stroke="#a02c20" stroke-width="1"/><path d="M11.4 1.8L12.8 4.4L15 2.6L14 0.6Z" fill="#868686"/><path d="M21 6L23.6 9.4" stroke="#7c7c7c" stroke-width="1.2"/></g>
<g transform="translate(69.3 317)"><path d="M2.4 2.6H21.6L32.6 13V43.4H2.4Z" fill="#c9cbd0" opacity="0.55"/><path d="M0.7 0.7H20.2L30.7 10.6V41.3H0.7Z" fill="url(#gdoc)" stroke="#b3bac8" stroke-width="1.4"/><path d="M20.2 0.9V10.6H30.5Z" fill="#fbfcfe" stroke="#c5cad6" stroke-width="1"/><path d="M11 6H17.4M11 9H17.4" stroke="#5a5cb0" stroke-width="1.4" stroke-dasharray="3 0.6"/><path d="M5 14.2H26" stroke="#8a8cd0" stroke-width="1.3" stroke-dasharray="4.4 0.8"/><rect x="6.4" y="19.4" width="18.4" height="9.4" fill="#fdfdff" stroke="#b9b6e2" stroke-width="1.4"/><path d="M6.4 24.1H24.8M15.6 19.4V28.8" stroke="#b9b6e2" stroke-width="1.4"/><path d="M5 33.4H26M5 36.6H26" stroke="#a6a8dc" stroke-width="1.2" stroke-dasharray="2 1 5 1 4 1.4"/><path d="M23 39.2H27" stroke="#a6a8dc" stroke-width="1.2" stroke-dasharray="1.4 1.2"/></g>
<g transform="translate(198 317)"><path d="M2.4 2.6H21.6L32.6 13V43.4H2.4Z" fill="#c9cbd0" opacity="0.55"/><path d="M0.7 0.7H20.2L30.7 10.6V41.3H0.7Z" fill="url(#gdoc)" stroke="#b3bac8" stroke-width="1.4"/><path d="M20.2 0.9V10.6H30.5Z" fill="#fbfcfe" stroke="#c5cad6" stroke-width="1"/><path d="M11 6H17.4M11 9H17.4" stroke="#5a5cb0" stroke-width="1.4" stroke-dasharray="3 0.6"/><path d="M5 14.2H26" stroke="#8a8cd0" stroke-width="1.3" stroke-dasharray="4.4 0.8"/><rect x="6.4" y="19.4" width="18.4" height="9.4" fill="#fdfdff" stroke="#b9b6e2" stroke-width="1.4"/><path d="M6.4 24.1H24.8M15.6 19.4V28.8" stroke="#b9b6e2" stroke-width="1.4"/><path d="M5 33.4H26M5 36.6H26" stroke="#a6a8dc" stroke-width="1.2" stroke-dasharray="2 1 5 1 4 1.4"/><path d="M23 39.2H27" stroke="#a6a8dc" stroke-width="1.2" stroke-dasharray="1.4 1.2"/></g>
<g transform="translate(327.2 317)"><path d="M2.4 2.6H21.6L32.6 13V43.4H2.4Z" fill="#c9cbd0" opacity="0.55"/><path d="M0.7 0.7H20.2L30.7 10.6V41.3H0.7Z" fill="url(#gdoc)" stroke="#b3bac8" stroke-width="1.4"/><path d="M20.2 0.9V10.6H30.5Z" fill="#fbfcfe" stroke="#c5cad6" stroke-width="1"/><path d="M11 6H17.4M11 9H17.4" stroke="#5a5cb0" stroke-width="1.4" stroke-dasharray="3 0.6"/><path d="M5 14.2H26" stroke="#8a8cd0" stroke-width="1.3" stroke-dasharray="4.4 0.8"/><rect x="6.4" y="19.4" width="18.4" height="9.4" fill="#fdfdff" stroke="#b9b6e2" stroke-width="1.4"/><path d="M6.4 24.1H24.8M15.6 19.4V28.8" stroke="#b9b6e2" stroke-width="1.4"/><path d="M5 33.4H26M5 36.6H26" stroke="#a6a8dc" stroke-width="1.2" stroke-dasharray="2 1 5 1 4 1.4"/><path d="M23 39.2H27" stroke="#a6a8dc" stroke-width="1.2" stroke-dasharray="1.4 1.2"/></g>
<g transform="translate(69.2 446.2)"><path d="M2.4 2.6H21.6L32.6 13V43.4H2.4Z" fill="#c9cbd0" opacity="0.55"/><path d="M0.7 0.7H20.2L30.7 10.6V41.3H0.7Z" fill="url(#gdoc)" stroke="#b3bac8" stroke-width="1.4"/><path d="M20.2 0.9V10.6H30.5Z" fill="#fbfcfe" stroke="#c5cad6" stroke-width="1"/><path d="M11 6H17.4M11 9H17.4" stroke="#5a5cb0" stroke-width="1.4" stroke-dasharray="3 0.6"/><path d="M5 14.2H26" stroke="#8a8cd0" stroke-width="1.3" stroke-dasharray="4.4 0.8"/><rect x="6.4" y="19.4" width="18.4" height="9.4" fill="#fdfdff" stroke="#b9b6e2" stroke-width="1.4"/><path d="M6.4 24.1H24.8M15.6 19.4V28.8" stroke="#b9b6e2" stroke-width="1.4"/><path d="M5 33.4H26M5 36.6H26" stroke="#a6a8dc" stroke-width="1.2" stroke-dasharray="2 1 5 1 4 1.4"/><path d="M23 39.2H27" stroke="#a6a8dc" stroke-width="1.2" stroke-dasharray="1.4 1.2"/></g>
<g transform="translate(198 446.2)"><path d="M2.4 2.6H21.6L32.6 13V43.4H2.4Z" fill="#c9cbd0" opacity="0.55"/><path d="M0.7 0.7H20.2L30.7 10.6V41.3H0.7Z" fill="url(#gdoc)" stroke="#b3bac8" stroke-width="1.4"/><path d="M20.2 0.9V10.6H30.5Z" fill="#fbfcfe" stroke="#c5cad6" stroke-width="1"/><path d="M11 6H17.4M11 9H17.4" stroke="#5a5cb0" stroke-width="1.4" stroke-dasharray="3 0.6"/><path d="M5 14.2H26" stroke="#8a8cd0" stroke-width="1.3" stroke-dasharray="4.4 0.8"/><rect x="6.4" y="19.4" width="18.4" height="9.4" fill="#fdfdff" stroke="#b9b6e2" stroke-width="1.4"/><path d="M6.4 24.1H24.8M15.6 19.4V28.8" stroke="#b9b6e2" stroke-width="1.4"/><path d="M5 33.4H26M5 36.6H26" stroke="#a6a8dc" stroke-width="1.2" stroke-dasharray="2 1 5 1 4 1.4"/><path d="M23 39.2H27" stroke="#a6a8dc" stroke-width="1.2" stroke-dasharray="1.4 1.2"/></g>
<g transform="translate(38.8 650.2)"><path d="M0 1.6L2.6 0H16.6V1.6Z" fill="#2a7a46"/><path d="M2.6 1.2H16V2.4H2.6Z" fill="#e8f4ea"/><path d="M0 1.6H3.4V22.4H0Z" fill="#257244"/><path d="M0 4.6H3.4V8.4H0Z" fill="#b07850"/><path d="M0 8.4H3.4V14.4H0Z" fill="#9ad0b0"/><path d="M0 17L3.4 15.4V19.4L0 20.6Z" fill="#0c2c18"/><rect x="3.2" y="2.4" width="14.8" height="20" fill="url(#ggreen)"/><path d="M7.4 9.2H12.6M7.4 14.8H12.6" stroke="#f2faf2" stroke-width="1.6"/><path d="M6.4 8H10.6M6.4 13.6H10.6" stroke="#1c5a34" stroke-width="1.1"/></g>
<g transform="translate(38.8 686.2)"><path d="M0 1.6L2.6 0H16.6V1.6Z" fill="#2a7a46"/><path d="M2.6 1.2H16V2.4H2.6Z" fill="#e8f4ea"/><path d="M0 1.6H3.4V22.4H0Z" fill="#257244"/><path d="M0 4.6H3.4V8.4H0Z" fill="#b07850"/><path d="M0 8.4H3.4V14.4H0Z" fill="#9ad0b0"/><path d="M0 17L3.4 15.4V19.4L0 20.6Z" fill="#0c2c18"/><rect x="3.2" y="2.4" width="14.8" height="20" fill="url(#ggreen)"/><path d="M7.4 9.2H12.6M7.4 14.8H12.6" stroke="#f2faf2" stroke-width="1.6"/><path d="M6.4 8H10.6M6.4 13.6H10.6" stroke="#1c5a34" stroke-width="1.1"/></g>
<g transform="translate(39.2 724.4)"><path d="M0.8 0.8H10.4L15.6 5.8V19.6H0.8Z" fill="#fdfdff" stroke="#929cb4" stroke-width="1.5"/><path d="M10.2 1V6H15.4" fill="#eef0f6" stroke="#aab2c6" stroke-width="1"/><path d="M5 3.6H8M5 6H8" stroke="#6a68c0" stroke-width="1.1"/><rect x="3.6" y="9" width="9.2" height="5.2" fill="none" stroke="#a29fd8" stroke-width="1.5"/><path d="M8.2 9V14.2" stroke="#a29fd8" stroke-width="1.3"/><path d="M3.6 16.6H12.8" stroke="#b4b2e0" stroke-width="1.2" stroke-dasharray="3 1"/></g>
<g transform="translate(39.2 760.4)"><path d="M0.8 0.8H10.4L15.6 5.8V19.6H0.8Z" fill="#fdfdff" stroke="#929cb4" stroke-width="1.5"/><path d="M10.2 1V6H15.4" fill="#eef0f6" stroke="#aab2c6" stroke-width="1"/><path d="M5 3.6H8M5 6H8" stroke="#6a68c0" stroke-width="1.1"/><rect x="3.6" y="9" width="9.2" height="5.2" fill="none" stroke="#a29fd8" stroke-width="1.5"/><path d="M8.2 9V14.2" stroke="#a29fd8" stroke-width="1.3"/><path d="M3.6 16.6H12.8" stroke="#b4b2e0" stroke-width="1.2" stroke-dasharray="3 1"/></g>
<g transform="translate(39.2 796.4)"><path d="M0.8 0.8H10.4L15.6 5.8V19.6H0.8Z" fill="#fdfdff" stroke="#929cb4" stroke-width="1.5"/><path d="M10.2 1V6H15.4" fill="#eef0f6" stroke="#aab2c6" stroke-width="1"/><path d="M5 3.6H8M5 6H8" stroke="#6a68c0" stroke-width="1.1"/><rect x="3.6" y="9" width="9.2" height="5.2" fill="none" stroke="#a29fd8" stroke-width="1.5"/><path d="M8.2 9V14.2" stroke="#a29fd8" stroke-width="1.3"/><path d="M3.6 16.6H12.8" stroke="#b4b2e0" stroke-width="1.2" stroke-dasharray="3 1"/></g>
<g transform="translate(663 651.4)"><path d="M0 16.6Q0.4 11.4 4.6 10.4H9.4L12 16.6Z" fill="#6cb6dc"/><ellipse cx="6.6" cy="5.6" rx="3.6" ry="4.3" fill="#e2a456"/><path d="M3 6.4Q2.2 0.8 6.6 0.8Q10.6 0.8 10.2 4.4Q7.4 2.8 4.8 4Q4.2 5.6 3.8 7.4Z" fill="#2a2420"/><path d="M5 20.4Q5.4 14.4 10.4 13.4H16Q21 14.4 21.6 20.4Z" fill="url(#gblueb)"/><path d="M10.8 13.4L13.2 16.6L15.6 13.4Z" fill="#f6f6f6"/><ellipse cx="13.2" cy="8.4" rx="4.2" ry="4.9" fill="url(#gface)"/><path d="M9 9.6Q8.2 3 13.4 3Q18 3.2 17.6 7.4Q14.6 5.4 11.4 6.6Q10.4 8.4 10.2 10.6Z" fill="#2a2420"/></g>
<g transform="translate(664.4 686.3)"><rect x="0" y="4.6" width="18.2" height="15.8" fill="#e6a640"/><rect x="1.6" y="0" width="7.4" height="12" fill="#8d97ab"/><rect x="6.8" y="1.4" width="8.8" height="12" fill="#a0a9bb"/><path d="M2.2 1.7H8.4M2.2 4.1H8.4M7.6 3.3H15M7.6 5.7H15" stroke="#e6e9f0" stroke-width="1.2"/><path d="M2.6 7.4H15.6V15H2.6Z" fill="#f6f6fb"/><path d="M5.4 8.8L11.4 10.4L5.4 12Z" fill="#c2c2e6"/><path d="M4.4 12.8Q9 15.8 13.8 12.8" stroke="#b4b4cc" stroke-width="1.1" fill="none"/><path d="M0 12.6Q9.1 16.2 18.2 12.6V20.4H0Z" fill="url(#gcat)"/></g>
<g transform="translate(664.4 722.3)"><rect x="0" y="4.6" width="18.2" height="15.8" fill="#e6a640"/><rect x="1.6" y="0" width="7.4" height="12" fill="#8d97ab"/><rect x="6.8" y="1.4" width="8.8" height="12" fill="#a0a9bb"/><path d="M2.2 1.7H8.4M2.2 4.1H8.4M7.6 3.3H15M7.6 5.7H15" stroke="#e6e9f0" stroke-width="1.2"/><path d="M2.6 7.4H15.6V15H2.6Z" fill="#f6f6fb"/><path d="M5.4 8.8L11.4 10.4L5.4 12Z" fill="#c2c2e6"/><path d="M4.4 12.8Q9 15.8 13.8 12.8" stroke="#b4b4cc" stroke-width="1.1" fill="none"/><path d="M0 12.6Q9.1 16.2 18.2 12.6V20.4H0Z" fill="url(#gcat)"/></g>
<g transform="translate(664.4 758.3)"><rect x="0" y="4.6" width="18.2" height="15.8" fill="#e6a640"/><rect x="1.6" y="0" width="7.4" height="12" fill="#8d97ab"/><rect x="6.8" y="1.4" width="8.8" height="12" fill="#a0a9bb"/><path d="M2.2 1.7H8.4M2.2 4.1H8.4M7.6 3.3H15M7.6 5.7H15" stroke="#e6e9f0" stroke-width="1.2"/><path d="M2.6 7.4H15.6V15H2.6Z" fill="#f6f6fb"/><path d="M5.4 8.8L11.4 10.4L5.4 12Z" fill="#c2c2e6"/><path d="M4.4 12.8Q9 15.8 13.8 12.8" stroke="#b4b4cc" stroke-width="1.1" fill="none"/><path d="M0 12.6Q9.1 16.2 18.2 12.6V20.4H0Z" fill="url(#gcat)"/></g>
<g transform="translate(1304.3 661.8)"><circle cx="-0.4" cy="0.6" r="8.6" fill="#8c98b4" opacity="0.75"/><path d="M0 0L8.20 0.00A8.2 8.2 0 0 1 -0.29 8.20Z" fill="#0c36f4"/><path d="M0 0L-0.29 8.20A8.2 8.2 0 0 1 -7.24 -3.85Z" fill="#ffff70"/><path d="M0 0L-7.24 -3.85A8.2 8.2 0 0 1 1.70 -8.02Z" fill="#1a9c5c"/><path d="M0 0L1.70 -8.02A8.2 8.2 0 0 1 8.20 -0.00Z" fill="#ff5c48"/><path d="M0 0L8.2 0" stroke="#ff7a20" stroke-width="1.2"/></g>
<g transform="translate(1304.3 697.8)"><circle cx="-0.4" cy="0.6" r="8.6" fill="#8c98b4" opacity="0.75"/><path d="M0 0L8.20 0.00A8.2 8.2 0 0 1 -0.29 8.20Z" fill="#0c36f4"/><path d="M0 0L-0.29 8.20A8.2 8.2 0 0 1 -7.24 -3.85Z" fill="#ffff70"/><path d="M0 0L-7.24 -3.85A8.2 8.2 0 0 1 1.70 -8.02Z" fill="#1a9c5c"/><path d="M0 0L1.70 -8.02A8.2 8.2 0 0 1 8.20 -0.00Z" fill="#ff5c48"/><path d="M0 0L8.2 0" stroke="#ff7a20" stroke-width="1.2"/></g>
<g transform="translate(1304.3 733.8)"><circle cx="-0.4" cy="0.6" r="8.6" fill="#8c98b4" opacity="0.75"/><path d="M0 0L8.20 0.00A8.2 8.2 0 0 1 -0.29 8.20Z" fill="#0c36f4"/><path d="M0 0L-0.29 8.20A8.2 8.2 0 0 1 -7.24 -3.85Z" fill="#ffff70"/><path d="M0 0L-7.24 -3.85A8.2 8.2 0 0 1 1.70 -8.02Z" fill="#1a9c5c"/><path d="M0 0L1.70 -8.02A8.2 8.2 0 0 1 8.20 -0.00Z" fill="#ff5c48"/><path d="M0 0L8.2 0" stroke="#ff7a20" stroke-width="1.2"/></g>
<g transform="translate(6.4 1022.4)"><rect x="0" y="0" width="5.8" height="21.4" rx="0.8" fill="url(#gb)"/><rect x="1.5" y="4.4" width="2.8" height="9.6" fill="#cfeafc"/><rect x="1.5" y="4.6" width="2.8" height="1.3" fill="#e88a50"/><rect x="7.5" y="0" width="5.8" height="21.4" rx="0.8" fill="url(#gb)"/><rect x="9.0" y="4.4" width="2.8" height="9.6" fill="#cfeafc"/><rect x="9.0" y="4.6" width="2.8" height="1.3" fill="#e88a50"/><rect x="15.3" y="0" width="5.8" height="21.4" rx="0.8" fill="url(#gb)"/><rect x="16.8" y="4.4" width="2.8" height="9.6" fill="#cfeafc"/><rect x="16.8" y="4.6" width="2.8" height="1.3" fill="#e88a50"/><circle cx="1.9" cy="17.4" r="0.9" fill="#14306a"/><circle cx="11.8" cy="12" r="4.9" fill="#c4e0f8" stroke="#b0833a" stroke-width="1.9"/><path d="M9.6 10.6Q11 8.8 13 9.2" stroke="#fff" stroke-width="1.4" fill="none"/><path d="M16 16.2L21.4 21.2" stroke="#e8923a" stroke-width="3" stroke-linecap="round"/><path d="M17.2 18.8L21 22.2" stroke="#8a5020" stroke-width="0.9"/></g>
<rect x="2" y="5" width="24.2" height="24" rx="2.4" fill="#ffff00" stroke="#f0e000" stroke-width="0.8"/><text x="4.8" y="16.7" font-family="Liberation Sans, sans-serif" font-size="12" font-weight="bold" fill="#f81c14" stroke="#f81c14" stroke-width="0.5" textLength="18.4" lengthAdjust="spacingAndGlyphs">1С</text><path d="M17 15.7H23" stroke="#f81c14" stroke-width="2"/><text x="6.2" y="26.8" font-family="Liberation Sans, sans-serif" font-size="11.5" fill="#ba7e00" textLength="15.2" lengthAdjust="spacingAndGlyphs">v8</text></svg>
<span class="t" style="left:31.6px;top:8.1px;font-size:18px;line-height:23px;transform:scaleX(0.9609);filter:none">1С:Предприятие (учебная версия) - Бухгалтерский учет в фирме "СластиЭКО"</span>
<span class="t" style="left:19.0px;top:42.1px;font-size:17.8px;line-height:23px;transform:scaleX(0.9832)"><u>Ф</u>айл</span>
<span class="t" style="left:75.6px;top:42.1px;font-size:17.8px;line-height:23px;transform:scaleX(0.9521)"><u>П</u>равка</span>
<span class="t" style="left:146.4px;top:42.1px;font-size:17.8px;line-height:23px;transform:scaleX(0.8992)">Операции</span>
<span class="t" style="left:235.0px;top:42.1px;font-size:17.8px;line-height:23px;transform:scaleX(0.9190)">Банк</span>
<span class="t" style="left:285.8px;top:42.1px;font-size:17.8px;line-height:23px;transform:scaleX(0.9766)">Касса</span>
<span class="t" style="left:346.4px;top:42.1px;font-size:17.8px;line-height:23px;transform:scaleX(0.9668)">Покупка</span>
<span class="t" style="left:424.0px;top:42.1px;font-size:17.8px;line-height:23px;transform:scaleX(0.9216)">Продажа</span>
<span class="t" style="left:506.2px;top:42.1px;font-size:17.8px;line-height:23px;transform:scaleX(0.9248)">Склад</span>
<span class="t" style="left:566.6px;top:42.1px;font-size:17.8px;line-height:23px;transform:scaleX(0.9315)">Производство</span>
<span class="t" style="left:689.4px;top:42.1px;font-size:17.8px;line-height:23px;transform:scaleX(0.8623)">ОС</span>
<span class="t" style="left:726.0px;top:42.1px;font-size:17.8px;line-height:23px;transform:scaleX(0.9060)">НМА</span>
<span class="t" style="left:775.2px;top:42.1px;font-size:17.8px;line-height:23px;transform:scaleX(0.9145)">Зарплата</span>
<span class="t" style="left:860.0px;top:42.1px;font-size:17.8px;line-height:23px;transform:scaleX(0.9344)">Кадры</span>
<span class="t" style="left:923.0px;top:42.1px;font-size:17.8px;line-height:23px;transform:scaleX(0.9240)">Отчеты</span>
<span class="t" style="left:992.6px;top:42.1px;font-size:17.8px;line-height:23px;transform:scaleX(0.9161)">Предприятие</span>
<span class="t" style="left:1106.8px;top:42.1px;font-size:17.8px;line-height:23px;transform:scaleX(0.9063)"><u>С</u>ервис</span>
<span class="t" style="left:1175.8px;top:42.1px;font-size:17.8px;line-height:23px;transform:scaleX(0.9336)"><u>О</u>кна</span>
<span class="t" style="left:1228.0px;top:42.1px;font-size:17.8px;line-height:23px;transform:scaleX(0.9114)">Сп<u>р</u>авка</span>
<span class="t" style="left:44.6px;top:116.6px;font-size:17.8px;line-height:23px;transform:scaleX(0.9352)">Показать панель функций</span>
<span class="t" style="left:284.6px;top:116.6px;font-size:17.8px;line-height:23px;transform:scaleX(0.9248)">Быстрое освоение</span>
<span class="t" style="left:466.6px;top:116.6px;font-size:17.8px;line-height:23px;transform:scaleX(0.9067)">Советы</span>
<span class="t" style="left:50.4px;top:169.1px;font-size:17.8px;line-height:23px;transform:scaleX(0.9088)">Предприятие</span>
<span class="t" style="left:202.0px;top:169.1px;font-size:17.8px;line-height:23px;transform:scaleX(0.9190)">Банк</span>
<span class="t" style="left:290.4px;top:169.1px;font-size:17.8px;line-height:23px;transform:scaleX(0.9641)">Касса</span>
<span class="t" style="left:387.6px;top:169.1px;font-size:17.8px;line-height:23px;transform:scaleX(0.9638)">Покупка</span>
<span class="t" style="left:503.0px;top:169.1px;font-size:17.8px;line-height:23px;transform:scaleX(0.9351)">Продажа</span>
<span class="t" style="left:623.6px;top:169.1px;font-size:17.8px;line-height:23px;transform:scaleX(0.9209)">Склад</span>
<span class="t" style="left:721.0px;top:169.1px;font-size:17.8px;line-height:23px;transform:scaleX(0.9315)">Производство</span>
<span class="t" style="left:881.4px;top:169.1px;font-size:17.8px;line-height:23px;transform:scaleX(0.8248)">ОС</span>
<span class="t" style="left:955.6px;top:169.1px;font-size:17.8px;line-height:23px;transform:scaleX(0.9110)">НМА</span>
<span class="t" style="left:1043.0px;top:169.1px;font-size:17.8px;line-height:23px;transform:scaleX(0.9068)">Зарплата</span>
<span class="t" style="left:1164.6px;top:168.6px;font-size:17.8px;line-height:23px;transform:scaleX(0.9194)">Кадры</span>
<span class="t" style="left:1266.0px;top:169.1px;font-size:17.8px;line-height:23px;transform:scaleX(0.8924)">Монитор</span>
<span class="t" style="left:1383.0px;top:169.1px;font-size:17.8px;line-height:23px;transform:scaleX(0.9069)">Руководителю</span>
<span class="t" style="left:82.0px;top:211.6px;font-size:29.5px;line-height:38px;transform:scaleX(1.1196);color:#858585">Кадры</span>
<span class="t" style="left:1684.0px;top:215.6px;font-size:17.8px;line-height:23px;transform:scaleX(0.9260)">Советы</span>
<span class="t" style="left:1788.0px;top:215.6px;font-size:17.8px;line-height:23px;transform:scaleX(0.9379)">Настройка...</span>
<span class="t" style="left:30.9px;top:259.9px;font-size:18.2px;line-height:24px;transform:scaleX(0.9844);color:#8f8678;font-weight:bold">Схема работы</span>
<span class="t u" style="left:48.4px;top:362.5px;font-size:17.8px;line-height:23px;transform:scaleX(0.9159);color:#3261fa">Прием на</span>
<span class="t u" style="left:51.8px;top:382.1px;font-size:17.8px;line-height:23px;transform:scaleX(0.9143);color:#3261fa">работу в</span>
<span class="t u" style="left:33.4px;top:401.5px;font-size:17.8px;line-height:23px;transform:scaleX(0.9485);color:#3261fa">организацию</span>
<span class="t u" style="left:176.4px;top:362.5px;font-size:17.8px;line-height:23px;transform:scaleX(0.9315);color:#3261fa">Кадровое</span>
<span class="t u" style="left:159.0px;top:382.1px;font-size:17.8px;line-height:23px;transform:scaleX(0.9395);color:#3261fa">перемещение</span>
<span class="t u" style="left:296.0px;top:362.5px;font-size:17.8px;line-height:23px;transform:scaleX(0.9589);color:#3261fa">Увольнение</span>
<span class="t u" style="left:333.0px;top:382.1px;font-size:17.8px;line-height:23px;transform:scaleX(1.0943);color:#3261fa">из</span>
<span class="t u" style="left:292.6px;top:401.5px;font-size:17.8px;line-height:23px;transform:scaleX(0.9555);color:#3261fa">организации</span>
<span class="t u" style="left:30.2px;top:491.6px;font-size:17.8px;line-height:23px;transform:scaleX(0.9411);color:#3261fa">Свед. о стаже</span>
<span class="t u" style="left:37.4px;top:511.1px;font-size:17.8px;line-height:23px;transform:scaleX(0.9554);color:#3261fa">и заработке</span>
<span class="t u" style="left:62.0px;top:530.5px;font-size:17.8px;line-height:23px;transform:scaleX(0.9009);color:#3261fa">СЗВ-4</span>
<span class="t u" style="left:176.6px;top:491.6px;font-size:17.8px;line-height:23px;transform:scaleX(0.9224);color:#3261fa">Передача</span>
<span class="t u" style="left:168.2px;top:511.1px;font-size:17.8px;line-height:23px;transform:scaleX(0.9568);color:#3261fa">документов</span>
<span class="t u" style="left:162.6px;top:530.5px;font-size:17.8px;line-height:23px;transform:scaleX(0.9526);color:#3261fa">СЗВ-4 в ПФР</span>
<span class="t" style="left:31.0px;top:615.8px;font-size:18.2px;line-height:24px;transform:scaleX(0.9695);color:#8f8678;font-weight:bold">Журналы</span>
<span class="t" style="left:656.5px;top:615.8px;font-size:18.2px;line-height:24px;transform:scaleX(0.9604);color:#8f8678;font-weight:bold">Справочники</span>
<span class="t" style="left:1287.6px;top:615.8px;font-size:18.2px;line-height:24px;transform:scaleX(0.9582);color:#8f8678;font-weight:bold">Отчеты</span>
<span class="t u" style="left:61.0px;top:651.4px;font-size:17.8px;line-height:23px;transform:scaleX(0.9424);color:#3261fa">Документы учета кадров организаций</span>
<span class="t u" style="left:61.0px;top:687.4px;font-size:17.8px;line-height:23px;transform:scaleX(0.9376);color:#3261fa">Документы персонифицированного учета ПФР</span>
<span class="t u" style="left:62.0px;top:723.4px;font-size:17.8px;line-height:23px;transform:scaleX(0.9277);color:#3261fa">Анкета застрахованного лица (АДВ-1)</span>
<span class="t u" style="left:61.0px;top:759.4px;font-size:17.8px;line-height:23px;transform:scaleX(0.9274);color:#3261fa">Заявление об обмене, дубликате страхового св-ва</span>
<span class="t u" style="left:61.0px;top:795.4px;font-size:17.8px;line-height:23px;transform:scaleX(0.9369);color:#3261fa">Заявление в ПФР (ДСВ-1)</span>
<span class="t u" style="left:686.6px;top:651.4px;font-size:17.8px;line-height:23px;transform:scaleX(0.9599);color:#3261fa">Физические лица</span>
<span class="t u" style="left:688.0px;top:687.4px;font-size:17.8px;line-height:23px;transform:scaleX(0.9240);color:#3261fa">Сотрудники организаций</span>
<span class="t u" style="left:686.6px;top:723.4px;font-size:17.8px;line-height:23px;transform:scaleX(0.9704);color:#3261fa">Должности</span>
<span class="t u" style="left:688.0px;top:759.4px;font-size:17.8px;line-height:23px;transform:scaleX(0.9118);color:#3261fa">Основания увольнения</span>
<span class="t u" style="left:1317.6px;top:651.4px;font-size:17.8px;line-height:23px;transform:scaleX(0.9286);color:#3261fa">Личная карточка Т-2</span>
<span class="t u" style="left:1317.6px;top:687.4px;font-size:17.8px;line-height:23px;transform:scaleX(0.9432);color:#3261fa">Списки работников организации</span>
<span class="t u" style="left:1317.6px;top:723.4px;font-size:17.8px;line-height:23px;transform:scaleX(0.9264);color:#3261fa">Заявление ДСВ-1</span>
<span class="t" style="left:29.6px;top:1021.4px;font-size:17.8px;line-height:23px;transform:scaleX(0.9130)">Панель функций</span>
<span class="t" style="left:5.6px;top:1054.8px;font-size:17.8px;line-height:23px;transform:scaleX(0.9380)">Для получения подсказки нажмите F1</span>
<span class="t" style="left:1820.4px;top:1054.8px;font-size:17.8px;line-height:23px;transform:scaleX(0.9217);color:#8a8a8a">CAP</span>
<span class="t" style="left:1873.0px;top:1054.8px;font-size:17.8px;line-height:23px;transform:scaleX(0.9383);color:#8a8a8a">NUM</span>
<span class="t" style="left:949.6px;top:80.6px;font-size:17px;line-height:22px;transform:scaleX(1.0538);color:#a9a9c6;font-weight:bold;font-family:'Liberation Serif', serif">M</span>
<span class="t" style="left:979.6px;top:80.6px;font-size:17px;line-height:22px;transform:scaleX(1.0065);color:#a9a9c6;font-weight:bold;font-family:'Liberation Serif', serif">M+</span>
<span class="t" style="left:1014.6px;top:80.6px;font-size:17px;line-height:22px;transform:scaleX(0.9806);color:#a9a9c6;font-weight:bold;font-family:'Liberation Serif', serif">M−</span>
</body></html>
